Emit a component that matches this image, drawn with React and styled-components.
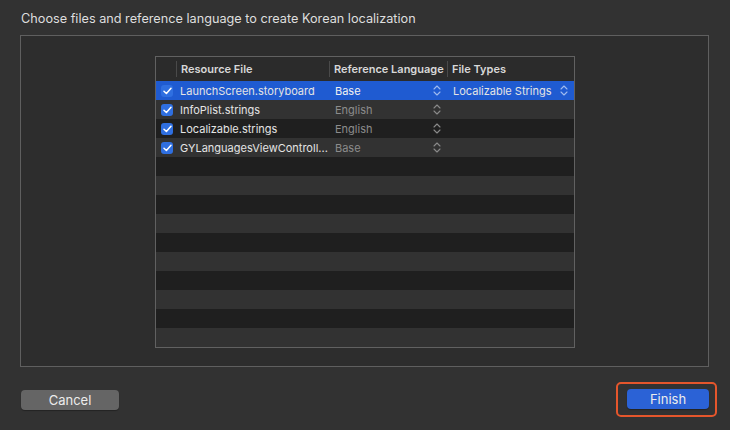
import React from 'react'
import styled, { createGlobalStyle } from 'styled-components'

const GlobalStyle = createGlobalStyle`
  html, body { margin: 0; padding: 0; background: #323232; }
  body { font-family: Inter, "Liberation Sans", sans-serif; }
`

const StyledWindow = styled.div`
  width: 730px;
  height: 430px;
  box-sizing: border-box;
  background: #323232;
  padding: 11px 21px 0 20px;
  display: flex;
  flex-direction: column;
`
const StyledTitle = styled.div`
  font-size: 12.7px;
  color: #dedede;
  height: 24px;
  padding-left: 1px;
`
const StyledBox = styled.div`
  width: 689px;
  height: 332px;
  box-sizing: border-box;
  border: 1px solid #5f5f5f;
  background: #2d2d2d;
  padding: 20px 0 0 134px;
`
const StyledTable = styled.div`
  width: 420px;
  height: 292px;
  box-sizing: border-box;
  border: 1px solid #616161;
  background: #2b2b2b;
  display: flex;
  flex-direction: column;
  overflow: hidden;
`
const StyledRow = styled.div`
  display: grid;
  grid-template-columns: 20px 153px 118px 1fr;
  height: ${p => (p.$header ? 24 : 19)}px;
  flex: none;
  align-items: center;
  background: ${p => p.$bg};
  font-size: 11px;
  color: ${p => p.$color || '#dcdcdc'};
`
const StyledHeadCell = styled.div`
  display: flex;
  align-items: center;
  padding-left: 4px;
  font-weight: 600;
  color: #d8d8d8;
  border-left: ${p => (p.$first ? 'none' : '1px solid #4a4a4a')};
  box-sizing: border-box;
  height: 16px;
`
const StyledCell = styled.div`
  display: flex;
  align-items: center;
  justify-content: space-between;
  padding: 0 6px 0 ${p => p.$pad || 4}px;
  white-space: nowrap;
  overflow: hidden;
  color: ${p => p.$color || 'inherit'};
`
const StyledCheck = styled.div`
  width: 12px;
  height: 12px;
  margin-left: 5px;
  border-radius: 3px;
  background: #2f6fe0;
  display: flex;
  align-items: center;
  justify-content: center;
`
const StyledFooter = styled.div`
  display: flex;
  justify-content: space-between;
  align-items: flex-start;
  padding-left: 1px;
`
const StyledButton = styled.div`
  width: ${p => p.$w}px;
  height: 20px;
  border-radius: 4px;
  background: ${p => p.$bg};
  color: #ececec;
  font-size: 13px;
  display: flex;
  align-items: center;
  justify-content: center;
  box-shadow: 0 1px 1px rgba(0, 0, 0, 0.3);
  margin-top: ${p => p.$top || 0}px;
`
const StyledHighlight = styled.div`
  border: 2px solid #e5562c;
  border-radius: 5px;
  padding: 5px 6px 6px 9px;
  margin-right: -8px;
  margin-top: 15px;
`

const Check = () => (
  <StyledCheck>
    <svg width="9" height="8" viewBox="0 0 9 8">
      <path d="M1 4.2 L3.4 6.5 L8 1.2" fill="none" stroke="#fff" strokeWidth="1.5" strokeLinecap="round" strokeLinejoin="round" />
    </svg>
  </StyledCheck>
)

const Updown = ({ color }) => (
  <svg width="8" height="11" viewBox="0 0 8 11">
    <path d="M1 4 L4 1 L7 4 M1 7 L4 10 L7 7" fill="none" stroke={color} strokeWidth="1.1" strokeLinecap="round" strokeLinejoin="round" />
  </svg>
)

const files = [
  { name: 'LaunchScreen.storyboard', lang: 'Base', type: 'Localizable Strings', selected: true },
  { name: 'InfoPlist.strings', lang: 'English' },
  { name: 'Localizable.strings', lang: 'English' },
  { name: 'GYLanguagesViewControll...', lang: 'Base' }
]

const rowBg = i => (i % 2 === 0 ? '#1f1f1f' : '#323232')

const App = () => {
  const empty = Array.from({ length: 10 }, (_, i) => i + files.length)
  return (
    <StyledWindow>
      <GlobalStyle />
      <StyledTitle>Choose files and reference language to create Korean localization</StyledTitle>
      <StyledBox>
        <StyledTable>
          <StyledRow $header $bg="#2b2b2b">
            <StyledHeadCell $first />
            <StyledHeadCell>Resource File</StyledHeadCell>
            <StyledHeadCell>Reference Language</StyledHeadCell>
            <StyledHeadCell>File Types</StyledHeadCell>
          </StyledRow>
          {files.map((f, i) => (
            <StyledRow key={f.name} $bg={f.selected ? '#1f5bd1' : rowBg(i)} $color="#e4e4e4">
              <Check />
              <StyledCell>{f.name}</StyledCell>
              <StyledCell $pad={6} $color={f.selected ? '#f0f0f0' : '#8c8c8c'}>
                {f.lang}
                <Updown color={f.selected ? '#9fbbef' : '#8a8a8a'} />
              </StyledCell>
              <StyledCell $pad={6}>
                {f.type || ''}
                {f.type && <Updown color="#9fbbef" />}
              </StyledCell>
            </StyledRow>
          ))}
          {empty.map(i => (
            <StyledRow key={i} $bg={rowBg(i)} />
          ))}
        </StyledTable>
      </StyledBox>
      <StyledFooter>
        <StyledButton $w={98} $bg="#656565" $top={23}>Cancel</StyledButton>
        <StyledHighlight>
          <StyledButton $w={82} $bg="#2b62d6">Finish</StyledButton>
        </StyledHighlight>
      </StyledFooter>
    </StyledWindow>
  )
}

export default App
